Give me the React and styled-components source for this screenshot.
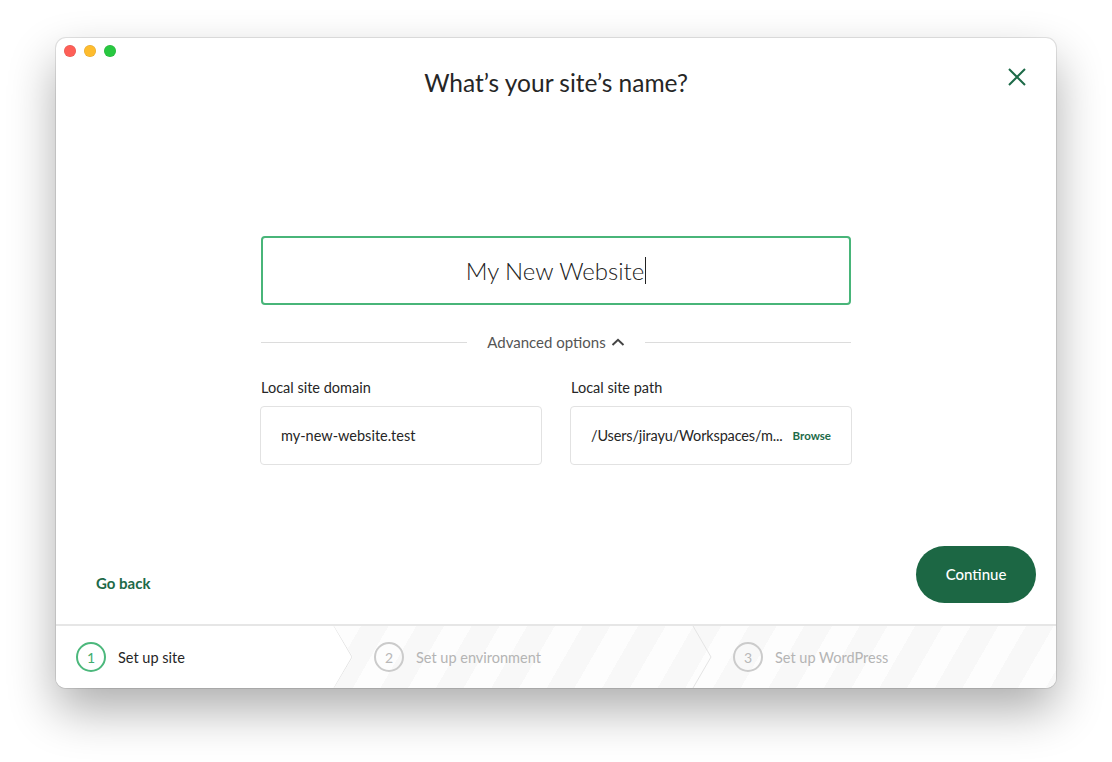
import React from "react";
import styled, { createGlobalStyle } from "styled-components";

const Global = createGlobalStyle`
  html, body { margin: 0; padding: 0; background: #ffffff; }
  body { font-family: Lato, "Open Sans", sans-serif; -webkit-font-smoothing: antialiased; }
  * { box-sizing: border-box; }
`;

const Page = styled.div`
  width: 1112px;
  height: 762px;
  padding: 38px 56px;
`;

const Window = styled.div`
  width: 1000px;
  height: 650px;
  background: #ffffff;
  border-radius: 10px;
  box-shadow: 0 0 0 1px rgba(0, 0, 0, 0.1), 0 22px 48px rgba(0, 0, 0, 0.32);
  display: flex;
  flex-direction: column;
  overflow: hidden;
`;

const TitleBar = styled.div`
  height: 26px;
  display: flex;
  align-items: center;
  gap: 8px;
  padding-left: 8px;
`;

const Light = styled.span`
  width: 12px;
  height: 12px;
  border-radius: 50%;
  background: ${(p) => p.$c};
  box-shadow: inset 0 0 0 0.5px rgba(0, 0, 0, 0.12);
`;

const Header = styled.div`
  display: grid;
  grid-template-columns: 1fr auto 1fr;
  height: 40px;
  padding: 0 30px;
`;

const Title = styled.h1`
  grid-column: 2;
  margin: 4px 0 0;
  font-size: 24.5px;
  line-height: 30px;
  font-weight: 400;
  color: #262626;
`;

const CloseButton = styled.button`
  grid-column: 3;
  justify-self: end;
  align-self: start;
  margin-top: 4px;
  width: 18px;
  height: 18px;
  padding: 0;
  border: 0;
  background: none;
  color: #1d6a48;
  display: flex;
`;

const Main = styled.div`
  flex: 1;
  display: flex;
  flex-direction: column;
  align-items: center;
  padding-top: 132px;
`;

const NameBox = styled.div`
  width: 590px;
  height: 69px;
  border: 2px solid #48b579;
  border-radius: 4px;
  display: flex;
  align-items: center;
  justify-content: center;
  font-size: 24px;
  font-weight: 300;
  color: #222;
`;

const Caret = styled.span`
  display: inline-block;
  width: 1px;
  height: 27px;
  background: #222;
  margin-left: 1px;
`;

const AdvancedRow = styled.div`
  width: 590px;
  margin-top: 27px;
  height: 20px;
  display: flex;
  align-items: center;
  gap: 20px;
`;

const Rule = styled.div`
  flex: 1;
  height: 1px;
  background: #dcdcdc;
`;

const AdvancedToggle = styled.button`
  border: 0;
  background: none;
  padding: 0;
  display: flex;
  align-items: center;
  gap: 5px;
  font-family: inherit;
  font-size: 15px;
  color: #555;
`;

const Fields = styled.div`
  margin-top: 27px;
  display: grid;
  grid-template-columns: 282px 282px;
  column-gap: 28px;
`;

const Field = styled.div`
  display: flex;
  flex-direction: column;
  gap: 9px;
`;

const Label = styled.label`
  font-size: 14.5px;
  line-height: 18px;
  color: #262626;
  padding-left: 1px;
`;

const InputBox = styled.div`
  height: 59px;
  border: 1px solid #e2e2e2;
  border-radius: 4px;
  display: flex;
  align-items: center;
  justify-content: space-between;
  padding: 0 20px;
  font-size: 14.5px;
  color: #262626;
`;

const PathText = styled.span`
  letter-spacing: -0.15px;
`;

const Browse = styled.span`
  font-size: 11.5px;
  font-weight: 700;
  color: #1d6a48;
`;

const Footer = styled.div`
  display: flex;
  justify-content: space-between;
  align-items: flex-end;
  padding: 0 20px 21px 40px;
`;

const GoBack = styled.button`
  border: 0;
  background: none;
  padding: 0;
  margin-bottom: 11px;
  font-family: inherit;
  font-size: 15px;
  font-weight: 700;
  color: #1d6a48;
`;

const Continue = styled.button`
  width: 120px;
  height: 57px;
  border: 0;
  border-radius: 29px;
  background: #1c6744;
  color: #ffffff;
  font-family: inherit;
  font-size: 15px;
  font-weight: 500;
  padding-bottom: 2px;
`;

const Stepper = styled.div`
  height: 64px;
  border-top: 2px solid #e6e6e6;
  display: flex;
  background: repeating-linear-gradient(
    120deg,
    #fdfdfd 0 24px,
    #f8f8f8 24px 48px
  );
`;

const Step = styled.div`
  position: relative;
  display: flex;
  align-items: center;
  gap: 12px;
  width: ${(p) => p.$w};
  flex: ${(p) => (p.$w ? "none" : "1")};
  padding-left: 39px;
  margin-left: -18px;
  background: ${(p) => (p.$active ? "#ffffff" : "transparent")};
  clip-path: ${(p) =>
    p.$active
      ? "polygon(0 0, calc(100% - 19px) 0, 100% 50%, calc(100% - 19px) 100%, 0 100%)"
      : "none"};
  &:first-child {
    margin-left: 0;
    padding-left: 20px;
  }
`;

const Circle = styled.span`
  width: 30px;
  height: 30px;
  border-radius: 50%;
  border: 2px solid ${(p) => (p.$active ? "#4cb87c" : "#cbcbcb")};
  color: ${(p) => (p.$active ? "#3fae6f" : "#b8b8b8")};
  font-size: 14px;
  display: flex;
  align-items: center;
  justify-content: center;
`;

const StepText = styled.span`
  font-size: 14.5px;
  color: ${(p) => (p.$active ? "#262626" : "#b4b4b4")};
`;

const Chevron = styled.svg`
  position: absolute;
  right: 0;
  top: 0;
`;

const steps = [
  { n: 1, label: "Set up site", w: "297px", active: true },
  { n: 2, label: "Set up environment", w: "377px" },
  { n: 3, label: "Set up WordPress" },
];

export default function App() {
  return (
    <Page>
      <Global />
      <Window>
        <TitleBar>
          <Light $c="#fe5f57" />
          <Light $c="#febc2e" />
          <Light $c="#28c840" />
        </TitleBar>
        <Header>
          <Title>What’s your site’s name?</Title>
          <CloseButton aria-label="Close">
            <svg width="18" height="18" viewBox="0 0 18 18">
              <path d="M1 1 L17 17 M17 1 L1 17" stroke="currentColor" strokeWidth="2" fill="none" />
            </svg>
          </CloseButton>
        </Header>
        <Main>
          <NameBox>
            My New Website
            <Caret />
          </NameBox>
          <AdvancedRow>
            <Rule />
            <AdvancedToggle>
              Advanced options
              <svg width="14" height="8" viewBox="0 0 14 8">
                <path d="M1.5 7 L7 1.8 L12.5 7" stroke="#444" strokeWidth="2" fill="none" />
              </svg>
            </AdvancedToggle>
            <Rule />
          </AdvancedRow>
          <Fields>
            <Field>
              <Label>Local site domain</Label>
              <InputBox>my-new-website.test</InputBox>
            </Field>
            <Field>
              <Label>Local site path</Label>
              <InputBox>
                <PathText>/Users/jirayu/Workspaces/m...</PathText>
                <Browse>Browse</Browse>
              </InputBox>
            </Field>
          </Fields>
        </Main>
        <Footer>
          <GoBack>Go back</GoBack>
          <Continue>Continue</Continue>
        </Footer>
        <Stepper>
          {steps.map((s, i) => (
            <Step key={s.n} $w={s.w} $active={s.active}>
              <Circle $active={s.active}>{s.n}</Circle>
              <StepText $active={s.active}>{s.label}</StepText>
              {i < steps.length - 1 && (
                <Chevron width="20" height="62" viewBox="0 0 20 62">
                  <path d="M1 0 L19 31 L1 62" stroke="#e4e4e4" strokeWidth="1" fill="none" />
                </Chevron>
              )}
            </Step>
          ))}
        </Stepper>
      </Window>
    </Page>
  );
}
